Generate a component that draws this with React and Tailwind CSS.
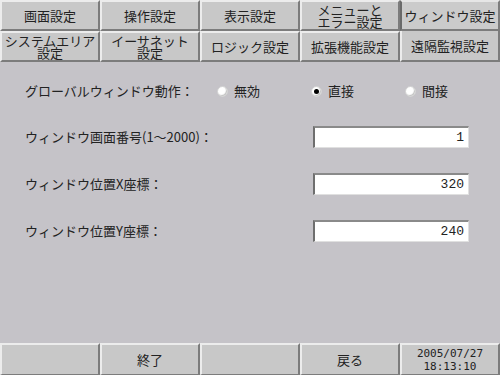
import React, { useState } from "react";

const FONT = { fontFamily: '"Noto Sans CJK JP", "DejaVu Sans", sans-serif' };

const topTabs = ["画面設定", "操作設定", "表示設定", "メニューと\nエラー設定", "ウィンドウ設定"];
const subTabs = ["システムエリア\n設定", "イーサネット\n設定", "ロジック設定", "拡張機能設定", "遠隔監視設定"];
const footer = ["", "終了", "", "戻る", "date"];

const Tab = ({ label, active, flatTop }) => (
  <div
    className={`flex-1 h-full flex items-center justify-center text-center whitespace-pre leading-[12px] text-[13px] text-[#222] border-r-2 border-b-2 border-r-[#7c7c7c] border-b-[#7c7c7c] ${
      active
        ? "bg-[#cbcbcb] border-l-2 border-l-[#6a6a6a] border-t-2 border-t-[#e6e6e6]"
        : "bg-[#c8c8c8] border-l-2 border-l-[#ececec] " + (flatTop ? "border-t-0" : "border-t-2 border-t-[#ececec]")
    }`}
  >
    {label}
  </div>
);

const Radio = ({ checked, label, onClick }) => (
  <button onClick={onClick} className="flex items-center gap-[6px] bg-transparent">
    <span className="w-[11px] h-[11px] rounded-full bg-white border border-[#d0d0d0] shadow-[inset_-1px_-1px_1px_#c0c0c0] flex items-center justify-center">
      {checked && <span className="w-[5px] h-[5px] rounded-full bg-black" />}
    </span>
    <span className="text-[13px] text-[#222]">{label}</span>
  </button>
);

const Field = ({ label, value }) => (
  <div className="flex items-center h-[22px]">
    <div className="w-[313px] pl-[25px] text-[13px] text-[#222]">{label}</div>
    <div className="w-[156px] h-[22px] bg-white border-l-2 border-t-2 border-l-[#6e6e6e] border-t-[#8a8a8a] border-r border-b border-r-[#e0e0e0] border-b-[#e0e0e0] flex items-center justify-end pr-[4px] text-[13px] text-[#222]"
      style={{ fontFamily: '"Liberation Mono", "DejaVu Sans Mono", monospace' }}>
      {value}
    </div>
  </div>
);

export default function App() {
  const [mode, setMode] = useState("direct");

  return (
    <div className="w-[500px] h-[375px] bg-[#c5c3c8] flex flex-col overflow-hidden" style={FONT}>
      <div className="flex h-[31px]">
        {topTabs.map((t, i) => (
          <Tab key={i} label={t} active={i === 4} />
        ))}
      </div>
      <div className="flex h-[31px]">
        {subTabs.map((t, i) => (
          <Tab key={i} label={t} flatTop={i === 4} />
        ))}
      </div>

      <div className="flex-1 flex flex-col pt-[22px]">
        <div className="flex items-center h-[14px]">
          <div className="w-[217px] pl-[25px] text-[13px] text-[#222]">グローバルウィンドウ動作：</div>
          <div className="w-[94px]">
            <Radio label="無効" checked={mode === "off"} onClick={() => setMode("off")} />
          </div>
          <div className="w-[94px]">
            <Radio label="直接" checked={mode === "direct"} onClick={() => setMode("direct")} />
          </div>
          <Radio label="間接" checked={mode === "indirect"} onClick={() => setMode("indirect")} />
        </div>
        <div className="flex flex-col gap-[25px] mt-[28px]">
          <Field label="ウィンドウ画面番号(1～2000)：" value="1" />
          <Field label="ウィンドウ位置X座標：" value="320" />
          <Field label="ウィンドウ位置Y座標：" value="240" />
        </div>
      </div>

      <div className="flex h-[32px]">
        {footer.map((f, i) => (
          <div
            key={i}
            className="flex-1 h-full bg-[#c8c8c8] border-t-2 border-l-2 border-t-[#ececec] border-l-[#ececec] border-r-2 border-b border-r-[#7c7c7c] border-b-[#7c7c7c] flex items-center justify-center text-[13px] text-[#222]"
          >
            {f === "date" ? (
              <div
                className="flex flex-col items-center leading-[13px] text-[11px]"
                style={{ fontFamily: '"DejaVu Sans Mono", "Liberation Mono", monospace' }}
              >
                <span>2005/07/27</span>
                <span>18:13:10</span>
              </div>
            ) : (
              f
            )}
          </div>
        ))}
      </div>
    </div>
  );
}
